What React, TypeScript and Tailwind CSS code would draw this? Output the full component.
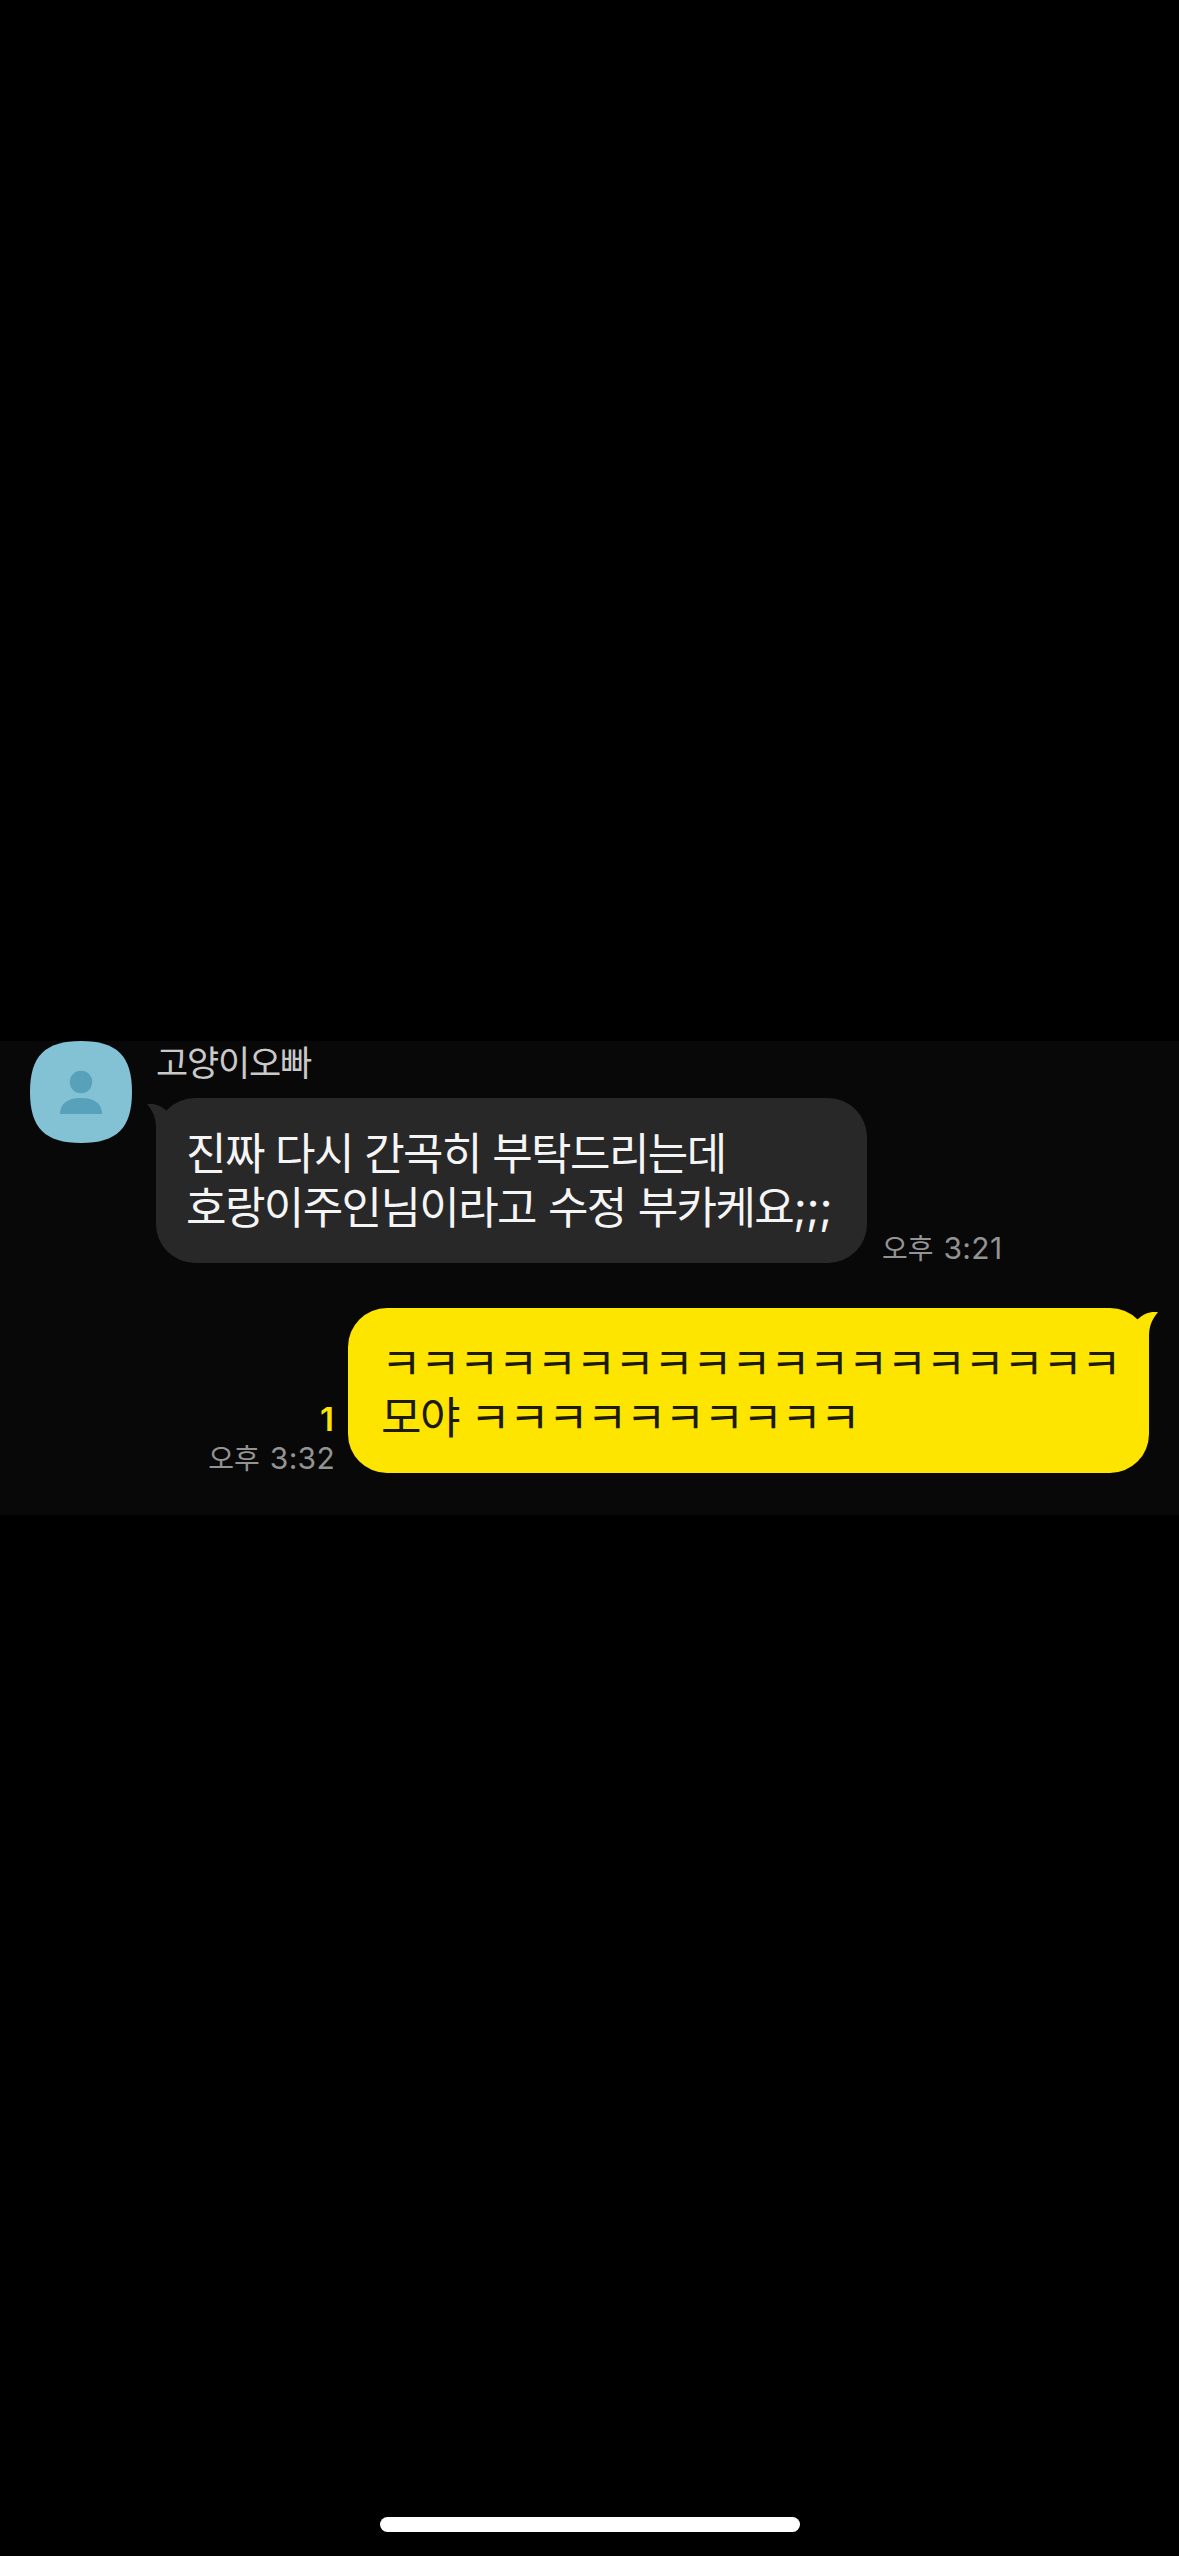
import React from "react";

function Avatar() {
  return (
    <svg className="h-[102px] w-[102px] shrink-0" viewBox="0 0 102 102">
      <path
        d="M51 0C87 0 102 15 102 51S87 102 51 102 0 87 0 51 15 0 51 0Z"
        fill="#83c1d5"
      />
      <circle cx="51" cy="41" r="11.2" fill="#57a1bb" />
      <path d="M30 73C30 63 37 57 51 57S72 63 72 73Z" fill="#57a1bb" />
    </svg>
  );
}

function Tail({ className }: { className: string }) {
  return (
    <svg className={className} viewBox="0 0 32 40">
      <path d="M0 6.2C8 5.2 14 7.5 20 13L32 20V40H9V30C9 20 6 13 0 6.2Z" fill="currentColor" />
    </svg>
  );
}

function Time({ value }: { value: string }) {
  return (
    <span className="flex items-baseline text-[28px] leading-[30px] text-[#939393]">
      <span className="font-['Noto_Sans_CJK_KR',sans-serif]">오후</span>
      <span className="ml-[10px] font-['Inter',sans-serif] text-[30px] tracking-[0.3px]">{value}</span>
    </span>
  );
}

export default function App() {
  return (
    <main
      lang="ko"
      className="flex h-[2556px] w-[1179px] flex-col items-center overflow-hidden bg-black pt-[1041px] font-['Noto_Sans_CJK_KR',sans-serif]"
    >
      <section className="h-[474px] w-full shrink-0 bg-[#080808]">
        <div className="flex pl-[30px]">
          <Avatar />
          <div className="ml-6 flex flex-col items-start">
            <div className="h-[57px] text-[35px] leading-[40px] tracking-[-1.2px] text-[#c9c9c9]">고양이오빠</div>
            <div className="flex items-end">
              <div className="relative h-[165px] w-[711px] rounded-[39px] bg-[#282828] pt-[26px] pl-[30px] text-[44px] leading-[54px] tracking-[-1.59px] whitespace-nowrap text-[#f5f5f5]">
                <Tail className="absolute top-0 -left-[9px] h-10 w-8 text-[#282828]" />
                <p className="h-[54px] [word-spacing:0.6px]">진짜 다시 간곡히 부탁드리는데</p>
                <p className="h-[54px] [word-spacing:1.2px]">
                  호랑이주인님이라고 수정 부카케요
                  <span className="font-['Inter',sans-serif] text-[45px] tracking-[-0.7px]">;;;</span>
                </p>
              </div>
              <div className="ml-[15px]">
                <Time value="3:21" />
              </div>
            </div>
          </div>
        </div>
        <div className="mt-[45px] flex items-end justify-end pr-[30px]">
          <div className="mr-[13px] flex flex-col items-end">
            <span className="mr-px mb-[3px] font-['Inter',sans-serif] text-[33px] leading-[40px] font-semibold text-[#fee500]">
              1
            </span>
            <Time value="3:32" />
          </div>
          <div className="relative h-[165px] w-[801px] rounded-[39px] bg-[#fee500] pt-[26px] pl-[33px] text-[44px] leading-[54px] tracking-[-1.59px] whitespace-nowrap text-[#1c1a08]">
            <Tail className="absolute -top-[2px] -right-[9px] h-10 w-8 -scale-x-100 text-[#fee500]" />
            <p className="h-[54px]">ㅋㅋㅋㅋㅋㅋㅋㅋㅋㅋㅋㅋㅋㅋㅋㅋㅋㅋㅋ</p>
            <p className="h-[54px] [word-spacing:0.6px]">모야 ㅋㅋㅋㅋㅋㅋㅋㅋㅋㅋ</p>
          </div>
        </div>
      </section>
      <div className="mt-auto mb-6 h-[15px] w-[420px] rounded-full bg-white" />
    </main>
  );
}
